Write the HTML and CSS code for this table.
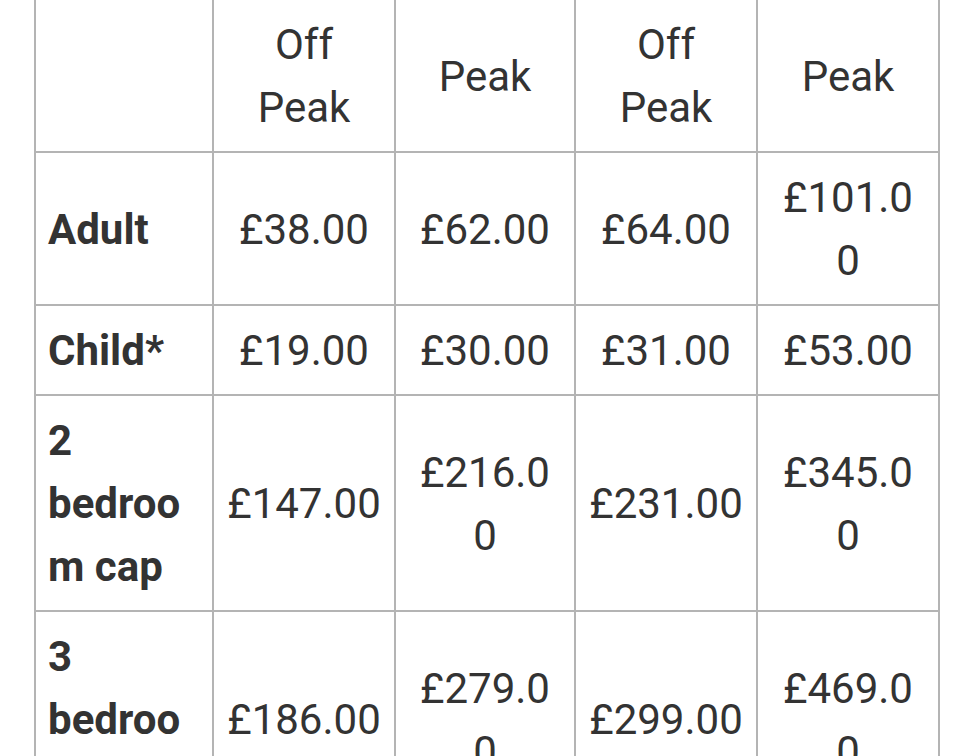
FILE: index.html
```html
<!DOCTYPE html>
<html lang="en">
<head>
<meta charset="utf-8">
<title>Prices</title>
<link rel="stylesheet" href="styles.css">
</head>
<body>
<div class="wrap">
<table class="prices">
<colgroup>
<col class="c1"><col class="c2"><col class="c3"><col class="c4"><col class="c5">
</colgroup>
<thead>
<tr><th></th><th>Off Peak</th><th>Peak</th><th>Off Peak</th><th>Peak</th></tr>
</thead>
<tbody>
<tr><td class="label">Adult</td><td>£38.00</td><td class="narrow">£62.00</td><td>£64.00</td><td class="narrow">£101.00</td></tr>
<tr><td class="label">Child*</td><td>£19.00</td><td class="narrow">£30.00</td><td>£31.00</td><td class="narrow">£53.00</td></tr>
<tr><td class="label">2 bedroom cap</td><td>£147.00</td><td class="narrow">£216.00</td><td>£231.00</td><td class="narrow">£345.00</td></tr>
<tr><td class="label">3 bedroom cap</td><td>£186.00</td><td class="narrow">£279.00</td><td>£299.00</td><td class="narrow">£469.00</td></tr>
</tbody>
</table>
</div>
</body>
</html>
```
FILE: styles.css
```css
html, body {
  margin: 0;
  padding: 0;
  background: #ffffff;
}
.wrap {
  padding-left: 34px;
  margin-top: -2px;
}
.prices {
  border-collapse: collapse;
  table-layout: fixed;
  width: 904px;
  font-family: Roboto, "Liberation Sans", sans-serif;
  font-size: 42px;
  line-height: 63px;
  color: #333333;
  border: 2px solid #b4b4b4;
}
.prices .c1 { width: 178px; }
.prices .c2 { width: 182px; }
.prices .c3 { width: 180px; }
.prices .c4 { width: 182px; }
.prices .c5 { width: 182px; }
.prices th,
.prices td {
  border: 2px solid #b4b4b4;
  padding: 13px 12px 12px;
  text-align: center;
  vertical-align: middle;
  font-weight: 400;
  overflow-wrap: anywhere;
}
.prices td.narrow {
  padding-left: 15px;
  padding-right: 15px;
}
.prices td.label {
  text-align: left;
  font-weight: 700;
}
```
